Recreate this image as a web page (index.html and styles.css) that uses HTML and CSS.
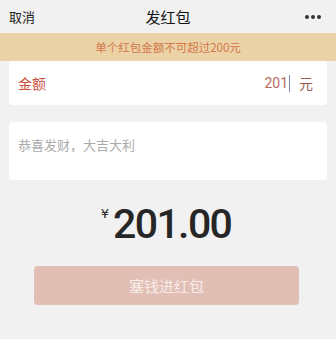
FILE: index.html
```html
<!DOCTYPE html>
<html lang="zh-CN">
<head>
    <meta charset="UTF-8">
    <meta name="viewport" content="width=device-width, initial-scale=1.0">
    <title>发红包</title>
    <link rel="stylesheet" href="styles.css">
</head>
<body>

<!-- Top bar -->
<div class="topbar">
    <span class="cancel">取消</span>
    <span class="title">发红包</span>
    <span class="more">
        <i></i><i></i><i></i>
    </span>
</div>

<!-- Warning banner -->
<div class="notice">单个红包金额不可超过200元</div>

<div class="card amount-row">
    <span class="label">金额</span>
    <span class="value">201<span class="cursor"></span></span>
    <span class="unit">元</span>
</div>

<div class="card wish">
    <span class="placeholder">恭喜发财，大吉大利</span>
</div>

<div class="total">
    <span class="yen">¥</span><span class="num">201.00</span>
</div>

<div class="btn-wrap">
    <button class="submit-btn">塞钱进红包</button>
</div>

</body>
</html>
```

FILE: styles.css
```css
* {
    margin: 0;
    padding: 0;
    box-sizing: border-box;
}

body {
    font-family: "Noto Sans CJK SC", "Liberation Sans", sans-serif;
    background: #f1f1f1;
    color: #111;
    width: 336px;
    height: 339px;
    overflow: hidden;
}

.topbar {
    height: 33px;
    display: flex;
    align-items: center;
    justify-content: space-between;
    padding: 0 9px;
    position: relative;
}

.cancel {
    font-size: 13px;
    color: #222;
}

.title {
    position: absolute;
    left: 0;
    right: 0;
    text-align: center;
    font-size: 15px;
    color: #111;
    pointer-events: none;
}

.more {
    display: flex;
    gap: 2px;
    margin-right: 6px;
}

.more i {
    width: 4px;
    height: 4px;
    border-radius: 50%;
    background: #333;
}

.notice {
    height: 28px;
    background: #ecd3a7;
    color: #d1774a;
    font-size: 11.5px;
    display: flex;
    align-items: center;
    justify-content: center;
}

.card {
    background: #fff;
    margin: 0 9px;
    border-radius: 4px;
}

.amount-row {
    height: 44px;
    border-radius: 0 0 4px 4px;
    display: flex;
    align-items: center;
    padding: 0 14px 0 9px;
    font-size: 14px;
}

.label {
    color: #c9523f;
    flex: 1;
}

.value {
    color: #b8695c;
    font-family: "Roboto", sans-serif;
    font-size: 14px;
    display: flex;
    align-items: center;
}

.cursor {
    width: 1px;
    height: 17px;
    background: #7b88c6;
    margin-left: 1px;
}

.unit {
    color: #9a5c50;
    margin-left: 9px;
}

.wish {
    margin-top: 17px;
    height: 58px;
    padding: 9px 9px;
}

.placeholder {
    font-size: 13px;
    color: #ababab;
}

.total {
    display: flex;
    justify-content: center;
    align-items: flex-start;
    margin-top: 21px;
    color: #262626;
    margin-left: -4px;
}

.yen {
    font-family: "DejaVu Sans", sans-serif;
    font-size: 13px;
    margin-top: 5px;
    margin-right: 4px;
}

.num {
    font-family: "Roboto", sans-serif;
    font-weight: 500;
    font-size: 41px;
    letter-spacing: -1.6px;
    line-height: 47px;
}

.btn-wrap {
    padding: 0 37px 0 34px;
    margin-top: 18px;
}

.submit-btn {
    width: 100%;
    height: 39px;
    border: none;
    border-radius: 4px;
    background: #e2bfb5;
    color: #f8ecea;
    font-family: inherit;
    font-size: 15px;
}
```
